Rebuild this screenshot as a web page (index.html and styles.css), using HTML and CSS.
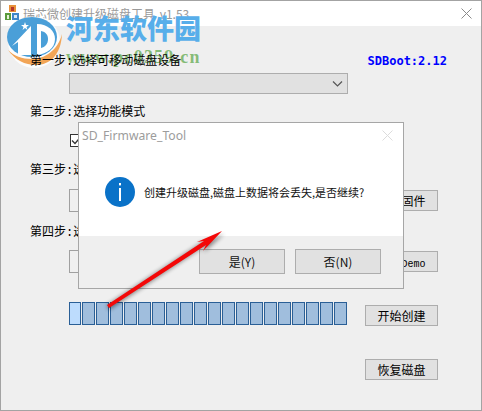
FILE: index.html
```html
<!DOCTYPE html>
<html lang="zh">
<head>
<meta charset="utf-8">
<title>瑞芯微创建升级磁盘工具</title>
<link rel="stylesheet" href="styles.css">
</head>
<body>
<div class="window">
  <header class="titlebar">
    <svg class="app-icon" width="14" height="16" viewBox="0 0 14 16">
      <rect x="4" y="0" width="7" height="7" fill="#e8913a"/>
      <rect x="6" y="2" width="3" height="4" fill="#b5352a"/>
      <rect x="0" y="8" width="6" height="7" fill="#5a9a3c"/>
      <rect x="2" y="10" width="2" height="4" fill="#e6f0d8"/>
      <rect x="7" y="8" width="7" height="7" fill="#3f86c8"/>
      <rect x="9" y="10" width="3" height="3" fill="#d8e8f5"/>
    </svg>
    <span class="title">瑞芯微创建升级磁盘工具 v1.53</span>
    <svg class="close" width="11" height="11" viewBox="0 0 11 11"><path d="M.5.5l10 10M10.500.5l-10 10" stroke="#8a8a8a" fill="none"/></svg>
  </header>
  <main class="body">
    <div class="label-row">
      <span class="label">第一步:选择可移动磁盘设备</span>
      <span class="boot">SDBoot:2.12</span>
    </div>
    <div class="combo">
      <svg width="11" height="6" viewBox="0 0 11 6"><path d="M1 .5l4.500 4.500L10 .5" stroke="#555" stroke-width="1.2" fill="none"/></svg>
    </div>
    <div class="label gap-10">第二步:选择功能模式</div>
    <div class="check gap-14">
      <svg width="11" height="11" viewBox="0 0 11 11"><path d="M1 5.500l3 3 6-7" stroke="#333" stroke-width="1.3" fill="none"/></svg>
    </div>
    <div class="label gap-15">第三步:选择固件文件</div>
    <div class="file-row gap-11">
      <div class="field"></div>
      <button class="btn">选择固件</button>
    </div>
    <div class="label gap-12">第四步:选择Demo文件</div>
    <div class="file-row gap-10">
      <div class="field"></div>
      <button class="btn">选择<span class="mono">Demo</span></button>
    </div>
    <div class="progress-row">
      <div class="progress">
        <i class="cell cell-on"></i><i class="cell"></i><i class="cell"></i><i class="cell"></i><i class="cell"></i>
        <i class="cell"></i><i class="cell"></i><i class="cell"></i><i class="cell"></i><i class="cell"></i>
        <i class="cell"></i><i class="cell"></i><i class="cell"></i><i class="cell"></i><i class="cell"></i>
        <i class="cell"></i><i class="cell"></i><i class="cell"></i><i class="cell"></i><i class="cell"></i>
      </div>
      <button class="btn btn-start">开始创建</button>
    </div>
    <div class="restore-row"><button class="btn">恢复磁盘</button></div>
  </main>
</div>

<section class="dialog">
  <div class="dialog-main">
    <div class="dialog-title">
      <span>SD_Firmware_Tool</span>
      <svg width="11" height="11" viewBox="0 0 11 11"><path d="M.5.5l10 10M10.500.5l-10 10" stroke="#dcdcdc" fill="none"/></svg>
    </div>
    <div class="dialog-msg">
      <svg width="30" height="30" viewBox="0 0 30 30">
        <circle cx="15" cy="15" r="15" fill="#0a72c8"/>
        <rect x="14" y="6" width="2" height="2.400" fill="#fff"/>
        <rect x="14" y="11" width="2" height="13" fill="#fff"/>
      </svg>
      <span>创建升级磁盘,磁盘上数据将会丢失,是否继续?</span>
    </div>
  </div>
  <div class="dialog-foot">
    <button class="dbtn">是(Y)</button>
    <button class="dbtn">否(N)</button>
  </div>
</section>

<svg class="arrow" width="482" height="411" viewBox="0 0 482 411">
  <defs>
    <filter id="sh" x="-20%" y="-20%" width="140%" height="140%"><feGaussianBlur stdDeviation="2"/></filter>
  </defs>
  <path d="M109 310L206 245L204 252L224 234L198 244L204 241L107 305Z" fill="#000" opacity=".45" filter="url(#sh)"/>
  <path d="M107 305L204 241L197 242L222 231L203 251L206 245L109 308Z" fill="#f40808"/>
</svg>

<div class="mark">
  <svg class="mark-logo" width="60" height="52" viewBox="0 0 60 52">
    <circle cx="29" cy="25" r="26" fill="#fff" opacity=".8"/>
    <path d="M3 33C10 43 20 48 31 48C45 48 56 38 57 17C53 33 40 42 27 42C17 42 9 39 3 33Z" fill="#f2a556"/>
    <ellipse cx="27" cy="20" rx="25" ry="20" fill="#4a9fd8"/>
    <path d="M7 29L26 9V38H13V25L7 29Z" fill="#fff"/>
    <path d="M32 7C43 7 50 14 50 22C50 31 42 37 32 38Z" fill="#fff"/>
    <path d="M36 14C41 15 43 18 43 22C43 27 40 30 36 31Z" fill="#4a9fd8"/>
    <path d="M20 5l1 3h3l-2.500 2 1 3-2.500-2-2.500 2 1-3-2.500-2h3z" fill="#fff"/>
  </svg>
  <div class="mark-name">河东软件园</div>
  <div class="mark-url">www.pc0359.cn</div>
</div>
</body>
</html>
```

FILE: styles.css
```css
* { box-sizing: border-box; }

html, body { margin: 0; padding: 0; }

body {
  position: relative;
  width: 482px;
  height: 411px;
  overflow: hidden;
  background: #fff;
  font-family: "Noto Sans CJK SC", "Liberation Sans", sans-serif;
  font-size: 12px;
  color: #000;
}

.window {
  width: 482px;
  height: 411px;
  display: flex;
  flex-direction: column;
  border: 1px solid #a3a3a3;
  background: #efefef;
}

.titlebar {
  flex: none;
  height: 25px;
  display: flex;
  align-items: center;
  background: #fff;
  padding: 0 9px 0 4px;
}

.app-icon { flex: none; margin-top: -1px; }

.title {
  margin-left: 4px;
  flex: 1;
  color: #9a9a9a;
  font-size: 12px;
  line-height: 16px;
  word-spacing: 2px;
}

.close { flex: none; }

.body {
  flex: 1;
  padding: 27px 0 0 29px;
  display: flex;
  flex-direction: column;
  align-items: flex-start;
}

.label-row {
  position: relative;
  z-index: 2;
  width: 417px;
  display: flex;
  justify-content: space-between;
  height: 20px;
}

.label {
  display: block;
  height: 16px;
  line-height: 19px;
  font-family: "Liberation Mono", "Noto Sans CJK SC", monospace;
  font-size: 12px;
  white-space: nowrap;
}

.boot {
  font-family: "DejaVu Sans Mono", monospace;
  font-weight: 700;
  font-size: 12px;
  line-height: 16px;
  color: #0000ff;
}

.combo {
  width: 279px;
  height: 21px;
  margin-left: 39px;
  display: flex;
  align-items: center;
  justify-content: flex-end;
  padding-right: 4px;
  background: #e1e1e1;
  border: 1px solid #adadad;
}

.check {
  width: 13px;
  height: 13px;
  margin-left: 40px;
  display: flex;
  align-items: center;
  justify-content: center;
  background: #fff;
  border: 1px solid #333;
}

.gap-10 { margin-top: 10px; }
.gap-11 { margin-top: 11px; }
.gap-12 { margin-top: 12px; }
.gap-14 { margin-top: 14px; }
.gap-15 { margin-top: 15px; }

.file-row {
  width: 369px;
  height: 23px;
  margin-left: 39px;
  display: flex;
  justify-content: space-between;
  align-items: center;
}

.field {
  width: 270px;
  height: 23px;
  background: #f0f0f0;
  border: 1px solid #a0a0a0;
}

.btn {
  flex: none;
  width: 73px;
  height: 21px;
  padding: 0;
  background: #e1e1e1;
  border: 1px solid #adadad;
  font: inherit;
  line-height: 19px;
  color: #000;
}

.mono {
  font-family: "Liberation Mono", monospace;
  font-size: 10px;
}

.progress-row {
  width: 369px;
  height: 23px;
  margin: 29px 0 0 39px;
  display: flex;
  justify-content: space-between;
}

.progress { display: flex; gap: 1px; }

.cell {
  display: block;
  width: 13px;
  height: 23px;
  background: #a0bedd;
  border: 1px solid #2a5f96;
}

.cell-on { width: 12px; background: #bddcfd; }

.btn-start { margin-top: 3px; }

.restore-row {
  width: 369px;
  margin: 34px 0 0 39px;
  display: flex;
  justify-content: flex-end;
}

.dialog {
  position: absolute;
  left: 78px;
  top: 122px;
  width: 326px;
  height: 167px;
  display: flex;
  flex-direction: column;
  background: #fff;
  border: 1px solid #a6a6a6;
}

.dialog-main {
  flex: 1;
  padding: 0 10px 0 3px;
}

.dialog-title {
  height: 24px;
  display: flex;
  align-items: center;
  justify-content: space-between;
  font-family: "Noto Sans", sans-serif;
  font-size: 12.2px;
  color: #9c9c9c;
  padding-top: 1px;
}

.dialog-msg {
  margin: 30px 0 0 23px;
  display: flex;
  align-items: center;
  gap: 9px;
  font-size: 11px;
  line-height: 16px;
  color: #111;
}

.dialog-foot {
  flex: none;
  height: 52px;
  padding: 13px 22px 0 0;
  display: flex;
  justify-content: flex-end;
  gap: 10px;
  background: #efefef;
}

.dbtn {
  width: 86px;
  height: 25px;
  padding: 0;
  background: #e1e1e1;
  border: 1px solid #adadad;
  font: inherit;
  font-size: 12px;
  color: #111;
}

.arrow {
  position: absolute;
  left: 0;
  top: 0;
  pointer-events: none;
}

.mark {
  position: absolute;
  left: 5px;
  top: 15px;
  width: 200px;
  height: 52px;
}

.mark-logo {
  position: absolute;
  left: 0;
  top: 2px;
}

.mark-name {
  position: absolute;
  left: 61px;
  top: -3px;
  font-family: "Noto Sans CJK SC", sans-serif;
  font-weight: 900;
  font-size: 27px;
  line-height: 32px;
  color: #57aeea;
  white-space: nowrap;
}

.mark-url {
  position: absolute;
  left: 61px;
  top: 33px;
  font-family: "Liberation Serif", serif;
  font-weight: 700;
  font-size: 18px;
  line-height: 18px;
  letter-spacing: 1.2px;
  color: rgba(98, 170, 80, .75);
  white-space: nowrap;
}
```
